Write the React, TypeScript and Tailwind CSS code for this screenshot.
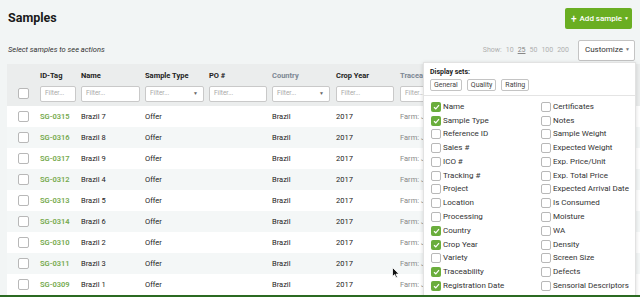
import React from "react";

const rows = [
  ["SG-0315", "Brazil 7"],
  ["SG-0316", "Brazil 8"],
  ["SG-0317", "Brazil 9"],
  ["SG-0312", "Brazil 4"],
  ["SG-0313", "Brazil 5"],
  ["SG-0314", "Brazil 6"],
  ["SG-0310", "Brazil 2"],
  ["SG-0311", "Brazil 3"],
  ["SG-0309", "Brazil 1"],
];

const left: [string, boolean][] = [
  ["Name", true],
  ["Sample Type", true],
  ["Reference ID", false],
  ["Sales #", false],
  ["ICO #", false],
  ["Tracking #", false],
  ["Project", false],
  ["Location", false],
  ["Processing", false],
  ["Country", true],
  ["Crop Year", true],
  ["Variety", false],
  ["Traceability", true],
  ["Registration Date", true],
  ["Created By", false],
];
const right: [string, boolean][] = [
  ["Certificates", false],
  ["Notes", false],
  ["Sample Weight", false],
  ["Expected Weight", false],
  ["Exp. Price/Unit", false],
  ["Exp. Total Price", false],
  ["Expected Arrival Date", false],
  ["Is Consumed", false],
  ["Moisture", false],
  ["WA", false],
  ["Density", false],
  ["Screen Size", false],
  ["Defects", false],
  ["Sensorial Descriptors", false],
  ["Score", false],
];

function Box({ checked, size = 11 }: { checked?: boolean; size?: number }) {
  if (checked) {
    return (
      <div
        className="flex items-center justify-center rounded-[2px] bg-[#6aad3c] shrink-0"
        style={{ width: size, height: size }}
      >
        <svg width="7" height="6" viewBox="0 0 7 6">
          <path d="M1 3.2 L2.8 4.8 L6 1.2" fill="none" stroke="white" strokeWidth="1.2" />
        </svg>
      </div>
    );
  }
  return (
    <div
      className="rounded-[2px] border border-[#b8b8b8] bg-white shrink-0"
      style={{ width: size, height: size }}
    />
  );
}

function Filter({ w, arrow }: { w: number; arrow?: boolean }) {
  return (
    <div
      className="h-[16px] rounded-[2px] border border-[#c9c9c9] bg-white flex items-center justify-between pl-[4px] pr-[5px] text-[6.5px] text-[#a8a8a8]"
      style={{ width: w }}
    >
      <span>Filter...</span>
      {arrow && <span className="text-[5px] text-[#666]">▼</span>}
    </div>
  );
}

export default function App() {
  return (
    <div className="relative w-[640px] h-[297px] overflow-hidden bg-[#f2f5f5] font-['Roboto',sans-serif] text-[#222]">
      {/* top bar */}
      <div className="flex items-start justify-between pl-[8px] pr-[8px] pt-[8px] h-[31px]">
        <div className="text-[12.5px] font-bold leading-[20px] text-[#1a1a1a]">Samples</div>
        <div className="h-[21px] w-[67px] rounded-[2px] bg-[#6aae22] text-white text-[8px] font-medium flex items-center pl-[6px] pr-[3px] justify-between whitespace-nowrap">
          <span className="flex items-center">
            <span className="text-[10px] mr-[3px] leading-none">+</span>Add sample
          </span>
          <span className="text-[5px]">▼</span>
        </div>
      </div>
      {/* second row */}
      <div className="flex items-center justify-between pl-[8px] pr-[5px] h-[22px] mt-[8px]">
        <div className="text-[7.5px] italic text-[#333]">Select samples to see actions</div>
        <div className="flex items-center">
          <div className="flex items-center gap-[4px] text-[7px] text-[#b0b0b0] mr-[9px]">
            <span>Show:</span>
            <span>10</span>
            <span className="underline text-[#888]">25</span>
            <span>50</span>
            <span>100</span>
            <span>200</span>
          </div>
          <div className="h-[21px] w-[57px] border border-[#c4c4c4] rounded-[2px] bg-white flex items-center justify-between pl-[6px] pr-[4px] text-[8px] text-[#333]">
            <span>Customize</span>
            <span className="text-[5px] text-[#777]">▼</span>
          </div>
        </div>
      </div>
      {/* table */}
      <div className="ml-[7px] mt-[3px] w-[700px]">
        <div className="bg-[#ebeded] h-[42px] flex">
          <div className="w-[29px] flex items-end justify-center pb-[7px] pl-[4px]">
            <Box />
          </div>
          {[
            ["ID-Tag", 41, 36, false, "#222"],
            ["Name", 64, 59, false, "#222"],
            ["Sample Type", 64, 59, true, "#222"],
            ["PO #", 63, 58, false, "#222"],
            ["Country", 64, 58, true, "#7d8894"],
            ["Crop Year", 64, 58, false, "#222"],
            ["Traceability", 100, 80, true, "#7d8894"],
          ].map(([label, w, iw, arrow, color]) => (
            <div
              key={label as string}
              className="flex flex-col pl-[4px] pt-[7px]"
              style={{ width: w as number }}
            >
              <div className="text-[7.5px] font-bold h-[15px] leading-[9px]" style={{ color: color as string }}>
                {label as string}
              </div>
              <Filter w={iw as number} arrow={arrow as boolean} />
            </div>
          ))}
        </div>
        {rows.map(([id, name], i) => (
          <div
            key={id}
            className={`h-[21px] flex items-center text-[7.5px] ${i % 2 === 0 ? "bg-white" : "bg-[#f4f7f7]"}`}
          >
            <div className="w-[29px] flex justify-center pl-[4px]">
              <Box />
            </div>
            <div className="w-[41px] pl-[4px] font-semibold text-[#74a94c]">{id}</div>
            <div className="w-[64px] pl-[4px] text-[#222]">{name}</div>
            <div className="w-[64px] pl-[4px] text-[#222]">Offer</div>
            <div className="w-[63px] pl-[4px]"></div>
            <div className="w-[64px] pl-[4px] text-[#222]">Brazil</div>
            <div className="w-[64px] pl-[4px] text-[#222]">2017</div>
            <div className="w-[100px] pl-[4px] text-[#888]">Farm: J</div>
          </div>
        ))}
      </div>
      {/* popover */}
      <div className="absolute left-[423px] top-[62px] w-[213px] h-[240px] bg-white border border-[#e2e2e2] shadow-[0_1px_4px_rgba(0,0,0,0.15)]">
        <div className="px-[6px] pt-[5px] pb-[4px] border-b border-[#e4e4e4]">
          <div className="text-[7px] font-bold text-[#222] leading-[9px]">Display sets:</div>
          <div className="flex gap-[5px] mt-[2px]">
            {["General", "Quality", "Rating"].map((b) => (
              <div
                key={b}
                className="h-[12px] px-[3px] border border-[#c4c4c4] rounded-[2px] text-[7px] leading-[10px] text-[#444] flex items-center"
              >
                {b}
              </div>
            ))}
          </div>
        </div>
        <div className="flex pl-[7px] pt-[4px]">
          <div className="w-[110px] flex flex-col">
            {left.map(([l, c]) => (
              <div key={l} className="h-[13.77px] flex items-center gap-[1px] text-[8px] text-[#333]">
                <Box checked={c} size={10} />
                <span className="ml-[1px]">{l}</span>
              </div>
            ))}
          </div>
          <div className="flex flex-col">
            {right.map(([l, c]) => (
              <div key={l} className="h-[13.77px] flex items-center gap-[1px] text-[8px] text-[#333]">
                <Box checked={c} size={10} />
                <span className="ml-[1px]">{l}</span>
              </div>
            ))}
          </div>
        </div>
      </div>
      {/* cursor */}
      <svg className="absolute left-[392px] top-[267px]" width="8" height="12" viewBox="0 0 8 12">
        <path d="M0.5 0.5 L0.5 9.5 L2.6 7.6 L4 10.8 L5.4 10.2 L4 7.1 L7 7.1 Z" fill="#111" stroke="white" strokeWidth="0.8" />
      </svg>
      {/* bottom line */}
      <div className="absolute left-0 bottom-0 w-[640px] h-[2px] bg-[#2b6a22]" />
    </div>
  );
}
